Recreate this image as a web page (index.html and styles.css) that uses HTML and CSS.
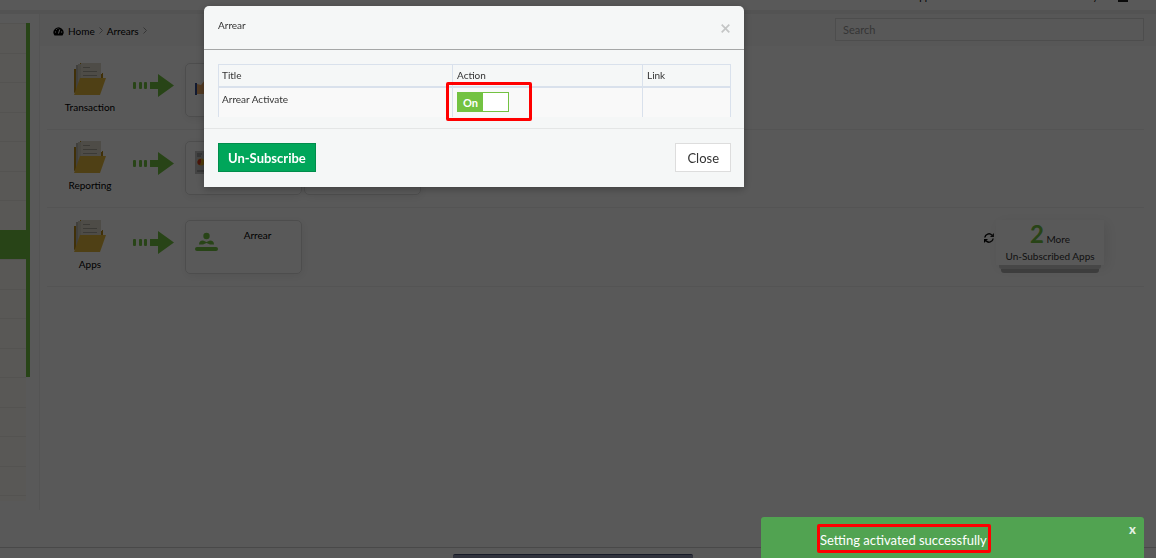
FILE: index.html
```html
<!DOCTYPE html>
<html lang="en">
<head>
<meta charset="utf-8">
<title>Arrears</title>
<link rel="stylesheet" href="styles.css">
</head>
<body>
<svg class="sprite" aria-hidden="true">
  <symbol id="folder" viewBox="0 0 32 32">
    <path d="M0 6h3V2h3V0h20v11h2v-1h1v5H27L0 30z" fill="#b88a18"/>
    <path d="M2 2h5v22l-3 6H2z" fill="#b9b7ae"/>
    <path d="M4 1h3v26H4z" fill="#d0cdc0"/>
    <path d="M7 0h20v20H7z" fill="#dedacb"/>
    <path d="M9 4.500h7M9 8.500h14M9 12.500h14" stroke="#aaa79b" stroke-width="1"/>
    <path d="M6 15h26l-6 17H0z" fill="#e3b83c"/>
  </symbol>
  <symbol id="arrow" viewBox="0 0 41 24">
    <g fill="#73c242"><rect y="8" width="3" height="7" rx="1"/><rect x="6" y="8" width="3" height="7" rx="1"/><rect x="11" y="8" width="3" height="7" rx="1"/><path d="M17 8h8V0l16 11.500L25 23v-8h-8z"/></g>
  </symbol>
</svg>

<header class="topbar"><a class="top-apps" href="#">Apps</a><a class="top-user" href="#">My</a><span class="top-mark"></span></header>
<div class="shell">
  <aside class="sidebar">
    <ul class="menu">
      <li></li><li></li><li></li><li></li><li></li><li></li><li></li><li class="active"></li>
      <li></li><li></li><li></li><li></li><li></li><li></li><li></li><li></li><li class="tail"></li>
    </ul>
    <div class="scroll"></div>
  </aside>
  <main class="main">
    <div class="crumb-bar">
      <nav class="crumbs" aria-label="Breadcrumb">
        <svg width="11" height="10" viewBox="0 0 11 10"><path d="M1.500 9.500a5 5 0 1 1 8 0z" fill="#000"/><path d="M5.500 7.500l1.200-4M2 6h1M8 6h1.200M3 3l.7.700M5 1.800v.8" stroke="#fff" stroke-width="1"/></svg>
        <a href="#">Home</a>
        <svg class="sep" width="4" height="7" viewBox="0 0 4 7"><path d="M.5.500l3 3-3 3" fill="none" stroke="#999"/></svg>
        <a href="#">Arrears</a>
        <svg class="sep" width="4" height="7" viewBox="0 0 4 7"><path d="M.5.500l3 3-3 3" fill="none" stroke="#999"/></svg>
      </nav>
      <input class="search" type="text" placeholder="Search" aria-label="Search">
    </div>
    <section class="rows">
      <div class="row">
        <div class="group"><svg width="32" height="32"><use href="#folder"/></svg><span>Transaction</span></div>
        <svg class="arrow" width="41" height="24"><use href="#arrow"/></svg>
        <div class="cards"><a class="card" href="#"><svg width="23" height="26" viewBox="0 0 23 26"><path d="M0 11h2v12H0z" fill="#334a8c"/><path d="M2 12l4 1 4-5 6 2 4 12H2z" fill="#edaa66"/></svg></a></div>
      </div>
      <div class="row">
        <div class="group"><svg width="32" height="32"><use href="#folder"/></svg><span>Reporting</span></div>
        <svg class="arrow" width="41" height="24"><use href="#arrow"/></svg>
        <div class="cards">
          <a class="card" href="#"><svg width="23" height="26" viewBox="0 0 23 26"><path d="M0 1h23v23H0z" fill="#c4c4c4"/><path d="M2 4h5M2 6h4M2 21h17" stroke="#777"/><circle cx="6" cy="12" r="3.500" fill="#e9ae20"/><path d="M6 12V9a3 3 0 1 0-1 6z" fill="#d43b24"/></svg></a>
          <a class="card" href="#"></a>
        </div>
      </div>
      <div class="row">
        <div class="group"><svg width="32" height="32"><use href="#folder"/></svg><span>Apps</span></div>
        <svg class="arrow" width="41" height="24"><use href="#arrow"/></svg>
        <div class="cards"><a class="card" href="#"><svg width="23" height="26" viewBox="0 0 23 26" fill="#73c242"><circle cx="11.500" cy="7" r="3.200"/><path d="M4 15.500q0-4 4-4l3.500 1.500 3.500-1.500q4 0 4 4h-4L11.500 14 8 15.500z"/><rect y="18" width="23" height="4" rx="2"/></svg><span>Arrear</span></a></div>
        <div class="more">
          <button class="refresh" type="button" aria-label="Refresh"><svg width="10" height="10" viewBox="0 0 10 10" fill="none" stroke="#000" stroke-width="1.500"><path d="M.8 4.500A4.200 4.200 0 0 1 8 2.200M9.200 5.500A4.200 4.200 0 0 1 2 7.800"/><path d="M10 0v4H6zM0 10V6h4z" fill="#000" stroke="none"/></svg></button>
          <div class="stack"><a class="stack-top" href="#"><span><b>2</b> More</span><span>Un-Subscribed Apps</span></a><i class="sheet"></i><i class="sheet low"></i></div>
        </div>
      </div>
    </section>
  </main>
</div>
<footer class="footer"><div class="dock"></div></footer>

<div class="backdrop">
  <div class="modal" role="dialog" aria-labelledby="modal-title">
    <div class="modal-head"><h1 id="modal-title">Arrear</h1><button class="dismiss" type="button" aria-label="Close dialog"><svg width="9" height="9" viewBox="0 0 9 9"><path d="M.7.700l7.600 7.600M8.300.700L.7 8.300" stroke="#c4c6c6" stroke-width="1.700"/></svg></button></div>
    <div class="modal-body">
      <table>
        <colgroup><col class="c-title"><col class="c-action"><col class="c-link"></colgroup>
        <thead><tr><th>Title</th><th>Action</th><th>Link</th></tr></thead>
        <tbody><tr>
          <td>Arrear Activate</td>
          <td><div class="switch-cell"><label class="switch"><input type="checkbox" checked aria-label="Arrear Activate"><span>On</span></label><i class="mark mark-switch"></i></div></td>
          <td></td>
        </tr></tbody>
      </table>
    </div>
    <div class="modal-foot"><button class="btn primary" type="button">Un-Subscribe</button><button class="btn" type="button">Close</button></div>
  </div>
</div>

<div class="toast" role="status"><p>Setting activated successfully<i class="mark mark-toast"></i></p><button type="button" aria-label="Dismiss">x</button></div>
</body>
</html>
```

FILE: styles.css
```css
* { box-sizing: border-box; }
body {
  margin: 0;
  min-height: 100vh;
  display: flex;
  flex-direction: column;
  overflow: hidden;
  background: #fff;
  color: #000;
  font: 10px/14px Lato, "Noto Sans", sans-serif;
}
a { color: inherit; text-decoration: none; }
button { font: inherit; padding: 0; border: 0; background: none; }
svg { display: block; flex: none; }
.sprite { position: absolute; width: 0; height: 0; }

.topbar {
  height: 14px;
  padding-right: 28px;
  display: flex;
  justify-content: flex-end;
  overflow: hidden;
  border-bottom: 4px solid #ededed;
  font-size: 10px;
  line-height: 0;
}
.top-apps { margin-right: 149px; margin-top: -4px; }
.top-user { margin-top: -4px; margin-right: 20px; }
.top-mark { width: 10px; height: 2px; background: #222; }

.shell { flex: 1; display: flex; margin-bottom: 37px; }
.sidebar { width: 40px; padding-top: 9px; display: flex; align-items: flex-start; border-right: 1px solid #f0f0f0; }
.menu { width: 26px; margin: 0; padding: 0; list-style: none; background: #fefcf5; }
.menu li { height: 29px; border-top: 1px solid #efede7; }
.menu li:nth-child(odd) { height: 30px; }
.menu .active { background: #73c242; border-color: #73c242; }
.menu li.tail { height: 6px; }
.scroll { width: 4px; height: 354px; background: #73c242; }

.main { flex: 1; min-width: 0; }
.crumb-bar { height: 32px; padding: 4px 12px 4px 13px; display: flex; align-items: flex-start; justify-content: space-between; background: #f9f9f9; }
.crumbs { display: flex; align-items: center; gap: 4px; height: 25px; }
.crumbs a { font-size: 10px; }
.search { width: 309px; height: 23px; padding: 0 7px; border: 1px solid #dcdcdc; background: #fdfdfd; font: 11px Lato, sans-serif; }
.search::placeholder { color: #999; opacity: 1; }

.rows { padding: 6px 12px 0 7px; }
.row { height: 78px; padding-top: 11px; display: flex; align-items: flex-start; border-bottom: 1px solid #efefef; }
.row:last-child { height: 79px; padding-top: 12px; }
.group { width: 86px; display: flex; flex-direction: column; align-items: center; gap: 5px; }
.arrow { margin-top: 11px; }
.cards { margin-left: 11px; display: flex; gap: 2px; }
.card { width: 117px; height: 54px; padding: 8px 9px; display: flex; border: 1px solid #dcdcdc; border-radius: 5px; box-shadow: 1px 2px 8px #eee; }
.card span { flex: 1; text-align: center; padding-left: 5px; line-height: 12px; }
.more { margin-left: auto; display: flex; align-items: flex-start; padding-right: 40px; gap: 2px; }
.refresh { margin-top: 13px; }
.stack { width: 108px; display: flex; flex-direction: column; align-items: center; }
.stack-top { width: 100%; height: 45px; display: flex; flex-direction: column; align-items: center; gap: 1px; color: #333; box-shadow: 3px 3px 12px #e8e8e8; line-height: 15px; }
.stack-top b { font-size: 24px; line-height: 28px; color: #73c242; }
.sheet { width: 102px; height: 4px; background: #ccc; border-radius: 0 0 3px 3px; }
.sheet.low { width: 98px; background: #b0b0b0; }

.footer { height: 11px; padding-top: 6px; display: flex; justify-content: center; border-top: 1px solid #d0d0d0; }
.dock { width: 240px; height: 4px; margin-right: 10px; background: #8990ad; border-top: 1px solid #444b70; border-radius: 2px 2px 0 0; }

.backdrop { position: fixed; inset: 0; display: flex; justify-content: center; align-items: flex-start; padding: 6px 208px 0 0; background: rgba(0, 0, 0, .65); }
.modal { width: 540px; background: #f5f7f7; border-radius: 5px 5px 0 0; color: #333; box-shadow: 0 2px 8px rgba(0, 0, 0, .3); }
.modal-head { height: 44px; padding: 12px 14px; display: flex; justify-content: space-between; border-bottom: 1px solid #a5a7a7; }
.modal-head h1 { margin: 0; font-size: 10px; font-weight: 400; line-height: 15px; }
.dismiss { height: 20px; }
.modal-body { padding: 14px 13px 11px 14px; }
table { width: 100%; table-layout: fixed; border-collapse: separate; border-spacing: 0; border: 1px solid #d9e1ec; border-width: 1px 0 0 1px; }
.c-title { width: 234px; }
.c-action { width: 190px; }
th, td { padding: 4px; text-align: left; vertical-align: top; font-weight: 400; border-right: 1px solid #d9e1ec; }
th:first-child, td:first-child { padding-left: 3px; }
th { height: 23px; padding-top: 3px; border-bottom: 2px solid #d9e1ec; }
td { height: 29px; background: #f9f9f9; }
.switch-cell { position: relative; }
.switch { display: flex; width: 52px; height: 20px; background: #fff; border: 1px solid #73c242; color: #fff; }
.switch input { position: absolute; opacity: 0; margin: 0; }
.switch span { width: 25px; background: #73c242; text-align: center; font-size: 11px; font-weight: 700; line-height: 19px; }
.mark { position: absolute; border: 3px solid #f00; border-radius: 2px; pointer-events: none; }
.mark-switch { left: -11px; top: -10px; width: 86px; height: 39px; }
.modal-foot { padding: 14px 13px 15px 14px; display: flex; justify-content: space-between; border-top: 1px solid #e4e6e6; }
.btn { height: 29px; padding: 0 11px; border: 1px solid #ddd; background: #fff; color: #333; font-size: 13px; line-height: 26px; }
.primary { padding: 0 9px; background: #00a65a; border-color: #008d4c; color: #fff; font-weight: 700; }

.toast { position: fixed; right: 12px; bottom: 0; width: 383px; height: 41px; padding: 8px 8px 0 59px; display: flex; justify-content: space-between; align-items: flex-start; background: #51a351; border-radius: 3px 3px 0 0; color: #fff; }
.toast p { position: relative; margin: 0; font-size: 13px; line-height: 30px; }
.toast button { color: #e4f1e4; font-size: 13px; font-weight: 900; line-height: 9px; }
.mark-toast { left: -3px; top: -1px; width: 174px; height: 29px; }
```
